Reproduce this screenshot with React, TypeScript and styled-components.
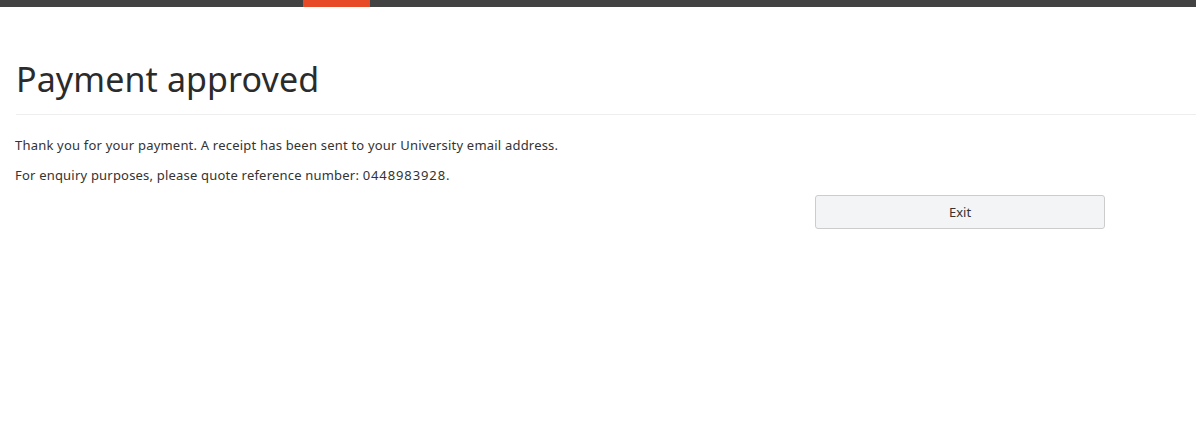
import React from "react";
import styled, { createGlobalStyle } from "styled-components";

const Global = createGlobalStyle`
  html, body { margin: 0; padding: 0; background: #fff; }
  body { font-family: "Noto Sans", "Liberation Sans", sans-serif; color: #333; }
`;

const TopBar = styled.div`
  height: 7px;
  background: #424242;
  display: flex;
`;

const Segment = styled.div<{ $offset: number; $width: number }>`
  margin-left: ${(p) => p.$offset}px;
  width: ${(p) => p.$width}px;
  background: #e64a27;
`;

const Main = styled.main`
  padding: 48px 0 0 16px;
`;

const Title = styled.h1`
  margin: 0;
  font-family: "Noto Sans", sans-serif;
  font-weight: 400;
  font-size: 34px;
  line-height: 48px;
  color: #2b2b2b;
  letter-spacing: 0.1px;
`;

const Rule = styled.hr`
  border: 0;
  border-top: 1px solid #eeeeee;
  margin: 11px 0 21px;
`;

const Body = styled.div`
  display: flex;
  flex-direction: column;
  gap: 12px;
`;

const Text = styled.p`
  margin: 0 0 0 -1px;
  font-size: 13px;
  line-height: 18px;
  letter-spacing: 0.2px;
  color: #333;
`;

const Ref = styled.span`
  letter-spacing: 0.9px;
`;

const Actions = styled.div`
  display: flex;
  padding-left: 799px;
  margin-top: -1px;
`;

const Button = styled.button`
  width: 290px;
  height: 34px;
  border: 1px solid #cccccc;
  border-radius: 3px;
  background: #f3f4f6;
  font-family: "Noto Sans", sans-serif;
  font-size: 13px;
  color: #333;
  cursor: pointer;
`;

export default function App() {
  return (
    <>
      <Global />
      <TopBar>
        <Segment $offset={303} $width={67} />
      </TopBar>
      <Main>
        <Title>Payment approved</Title>
        <Rule />
        <Body>
          <Text>Thank you for your payment. A receipt has been sent to your University email address.</Text>
          <Text>
            For enquiry purposes, please quote reference number: <Ref>0448983928</Ref>.
          </Text>
          <Actions>
            <Button>Exit</Button>
          </Actions>
        </Body>
      </Main>
    </>
  );
}
